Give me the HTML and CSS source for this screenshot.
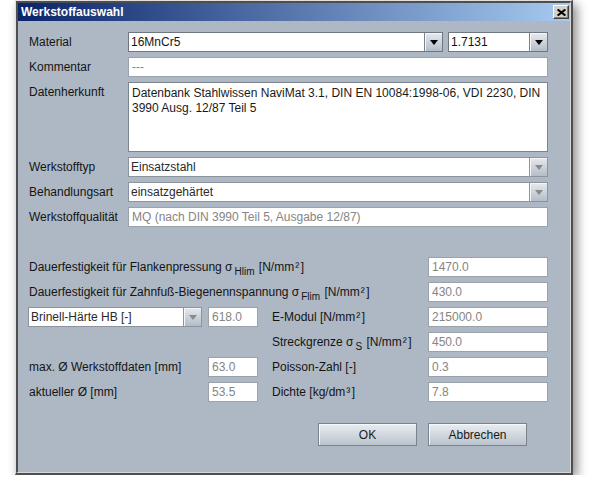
FILE: index.html
```html
<!DOCTYPE html>
<html lang="de">
<head>
<meta charset="utf-8">
<title>Werkstoffauswahl</title>
<link rel="stylesheet" href="styles.css">
</head>
<body>
<div class="window">
  <div class="frame">
    <div class="titlebar">
      <span class="title">Werkstoffauswahl</span>
      <span class="close"><svg width="9" height="7" viewBox="0 0 9 7"><path d="M0.6 0.4 L8.4 6.6 M8.4 0.4 L0.6 6.6" stroke="#000" stroke-width="2" fill="none"/></svg></span>
    </div>
    <div class="content">
      <div class="top">
        <div class="row">
          <span class="label">Material</span>
          <div class="combo grow"><span class="ctext">16MnCr5</span><span class="cbtn"><i class="tri"></i></span></div>
          <div class="combo small"><span class="ctext">1.7131</span><span class="cbtn"><i class="tri"></i></span></div>
        </div>
        <div class="row">
          <span class="label">Kommentar</span>
          <div class="field grow dis">---</div>
        </div>
        <div class="row tall">
          <span class="label">Datenherkunft</span>
          <div class="area grow">Datenbank Stahlwissen NaviMat 3.1, DIN EN 10084:1998-06, VDI 2230, DIN<br>3990 Ausg. 12/87 Teil 5</div>
        </div>
        <div class="row">
          <span class="label">Werkstofftyp</span>
          <div class="combo grow off"><span class="ctext">Einsatzstahl</span><span class="cbtn"><i class="tri"></i></span></div>
        </div>
        <div class="row">
          <span class="label">Behandlungsart</span>
          <div class="combo grow off"><span class="ctext">einsatzgehärtet</span><span class="cbtn"><i class="tri"></i></span></div>
        </div>
        <div class="row">
          <span class="label">Werkstoffqualität</span>
          <div class="field grow dis">MQ (nach DIN 3990 Teil 5, Ausgabe 12/87)</div>
        </div>
      </div>

      <div class="grid">
        <span class="label span3">Dauerfestigkeit für Flankenpressung <span class="sig">σ</span><sub>Hlim</sub> [N/mm<span class="sq">²</span>]</span>
        <div class="field dis c4">1470.0</div>

        <span class="label span3">Dauerfestigkeit für Zahnfuß-Biegenennspannung <span class="sig">σ</span><sub>Flim</sub> [N/mm<span class="sq">²</span>]</span>
        <div class="field dis c4">430.0</div>

        <div class="combo off c1"><span class="ctext">Brinell-Härte HB [-]</span><span class="cbtn"><i class="tri"></i></span></div>
        <div class="field dis c2">618.0</div>
        <span class="label c3">E-Modul [N/mm<span class="sq">²</span>]</span>
        <div class="field dis c4">215000.0</div>

        <span class="label c3">Streckgrenze <span class="sig">σ</span><sub>S</sub> [N/mm<span class="sq">²</span>]</span>
        <div class="field dis c4">450.0</div>

        <span class="label c1">max. Ø Werkstoffdaten [mm]</span>
        <div class="field dis c2">63.0</div>
        <span class="label c3">Poisson-Zahl [-]</span>
        <div class="field dis c4">0.3</div>

        <span class="label c1">aktueller Ø [mm]</span>
        <div class="field dis c2">53.5</div>
        <span class="label c3">Dichte [kg/dm<span class="sq">³</span>]</span>
        <div class="field dis c4">7.8</div>
      </div>

      <div class="buttons">
        <button class="btn">OK</button>
        <button class="btn">Abbrechen</button>
      </div>
    </div>
  </div>
</div>
</body>
</html>
```

FILE: styles.css
```css
* { box-sizing: border-box; }
html, body { margin: 0; padding: 0; background: #fff; }
body {
  font-family: "Liberation Sans", Arial, sans-serif;
  font-size: 12px;
  color: #141414;
}
.window {
  margin-left: 15px;
  width: 558px;
  height: 475px;
  border-top: 1px solid #e0e0e0;
  border-left: 1px solid #e0e0e0;
  border-right: 2px solid #4e4e4e;
  border-bottom: 2px solid #4e4e4e;
  box-shadow: 4px 4px 10px rgba(0, 0, 0, 0.45);
}
.frame {
  height: 100%;
  display: flex;
  flex-direction: column;
  border-top: 2px solid #4e4e4e;
  border-left: 2px solid #4e4e4e;
  border-right: 1px solid #d6d6d6;
  border-bottom: 1px solid #d6d6d6;
  background: #aeb8c4;
}
.titlebar {
  height: 18px;
  flex: none;
  display: flex;
  align-items: center;
  justify-content: space-between;
  padding: 0 1px 0 3px;
  background: linear-gradient(to right, #0a246a, #a6caf0);
}
.title {
  color: #fff;
  font-weight: bold;
  font-size: 12px;
}
.close {
  width: 16px;
  height: 14px;
  background: #d4d0c8;
  border: 1px solid;
  border-color: #ffffff #404040 #404040 #ffffff;
  box-shadow: inset -1px -1px 0 #808080;
  display: flex;
  align-items: center;
  justify-content: center;
}
.close svg { display: block; }

.content {
  flex: 1;
  padding: 11px 22px 0 11px;
}
.row {
  display: flex;
  align-items: center;
  height: 20px;
  margin-bottom: 5px;
}
.row.tall {
  height: 70px;
  align-items: flex-start;
}
.row.tall .label { padding-top: 3px; line-height: 15px; }
.label {
  width: 99px;
  flex: none;
  white-space: nowrap;
  line-height: 20px;
}
.grow { flex: 1; min-width: 0; }

.field {
  height: 20px;
  background: #fff;
  border: 1px solid #8e96a0;
  padding: 0 3px;
  line-height: 18px;
  white-space: nowrap;
  overflow: hidden;
}
.field.dis { color: #858585; border-color: #9aa2ac; }

.area {
  height: 70px;
  background: #fff;
  border: 1px solid #7c848e;
  padding: 3px 3px;
  line-height: 15px;
  white-space: nowrap;
  overflow: hidden;
  color: #1a1a1a;
}

.combo {
  height: 20px;
  display: flex;
  background: #fff;
  border: 1px solid #6f7781;
}
.combo.small { width: 100px; flex: none; margin-left: 5px; }
.combo .ctext {
  flex: 1;
  min-width: 0;
  padding-left: 2px;
  line-height: 18px;
  white-space: nowrap;
  overflow: hidden;
}
.combo .cbtn {
  width: 18px;
  flex: none;
  border-left: 1px solid #7a828c;
  background: linear-gradient(#e6eaef, #b4bdc7);
  box-shadow: inset 1px 1px 0 #f4f6f8;
  display: flex;
  align-items: center;
  justify-content: center;
}
.tri {
  display: block;
  width: 0;
  height: 0;
  border-left: 4px solid transparent;
  border-right: 4px solid transparent;
  border-top: 5px solid #000;
  margin-top: 1px;
}
.combo.off { border-color: #8c949e; }
.combo.off .ctext { color: #2a2a2a; }
.combo.off .cbtn { border-left-color: #8c949e; }
.combo.off .tri { border-top-color: #8a8a8a; }

.grid {
  margin-top: 30px;
  display: grid;
  grid-template-columns: 179px 64px 156px 120px;
  grid-auto-rows: 20px;
  row-gap: 5px;
  align-items: center;
}
.grid .label { width: auto; }
.span3 { grid-column: 1 / 4; }
.c1 { grid-column: 1; }
.c2 { grid-column: 2; width: 50px; }
.c3 { grid-column: 3; }
.c4 { grid-column: 4; }
.grid .combo.c1 { width: 174px; margin-left: -1px; }
.sig { margin-right: 1px; }
sub {
  font-size: 10px;
  vertical-align: -4px;
  line-height: 0;
  margin-left: 1px;
  margin-right: 1px;
}
.sq { padding: 0 1.5px 0 1px; }

.buttons {
  display: flex;
  justify-content: flex-end;
  gap: 11px;
  margin-top: 21px;
  padding-right: 21px;
}
.btn {
  width: 99px;
  height: 23px;
  font-family: "Liberation Sans", Arial, sans-serif;
  font-size: 12px;
  color: #1a1a1a;
  background: linear-gradient(#e9edf2, #bac3cd);
  border: 1px solid #7a828c;
  box-shadow: inset 1px 1px 0 #f6f8fa;
  border-radius: 0;
  padding: 0;
}
```
